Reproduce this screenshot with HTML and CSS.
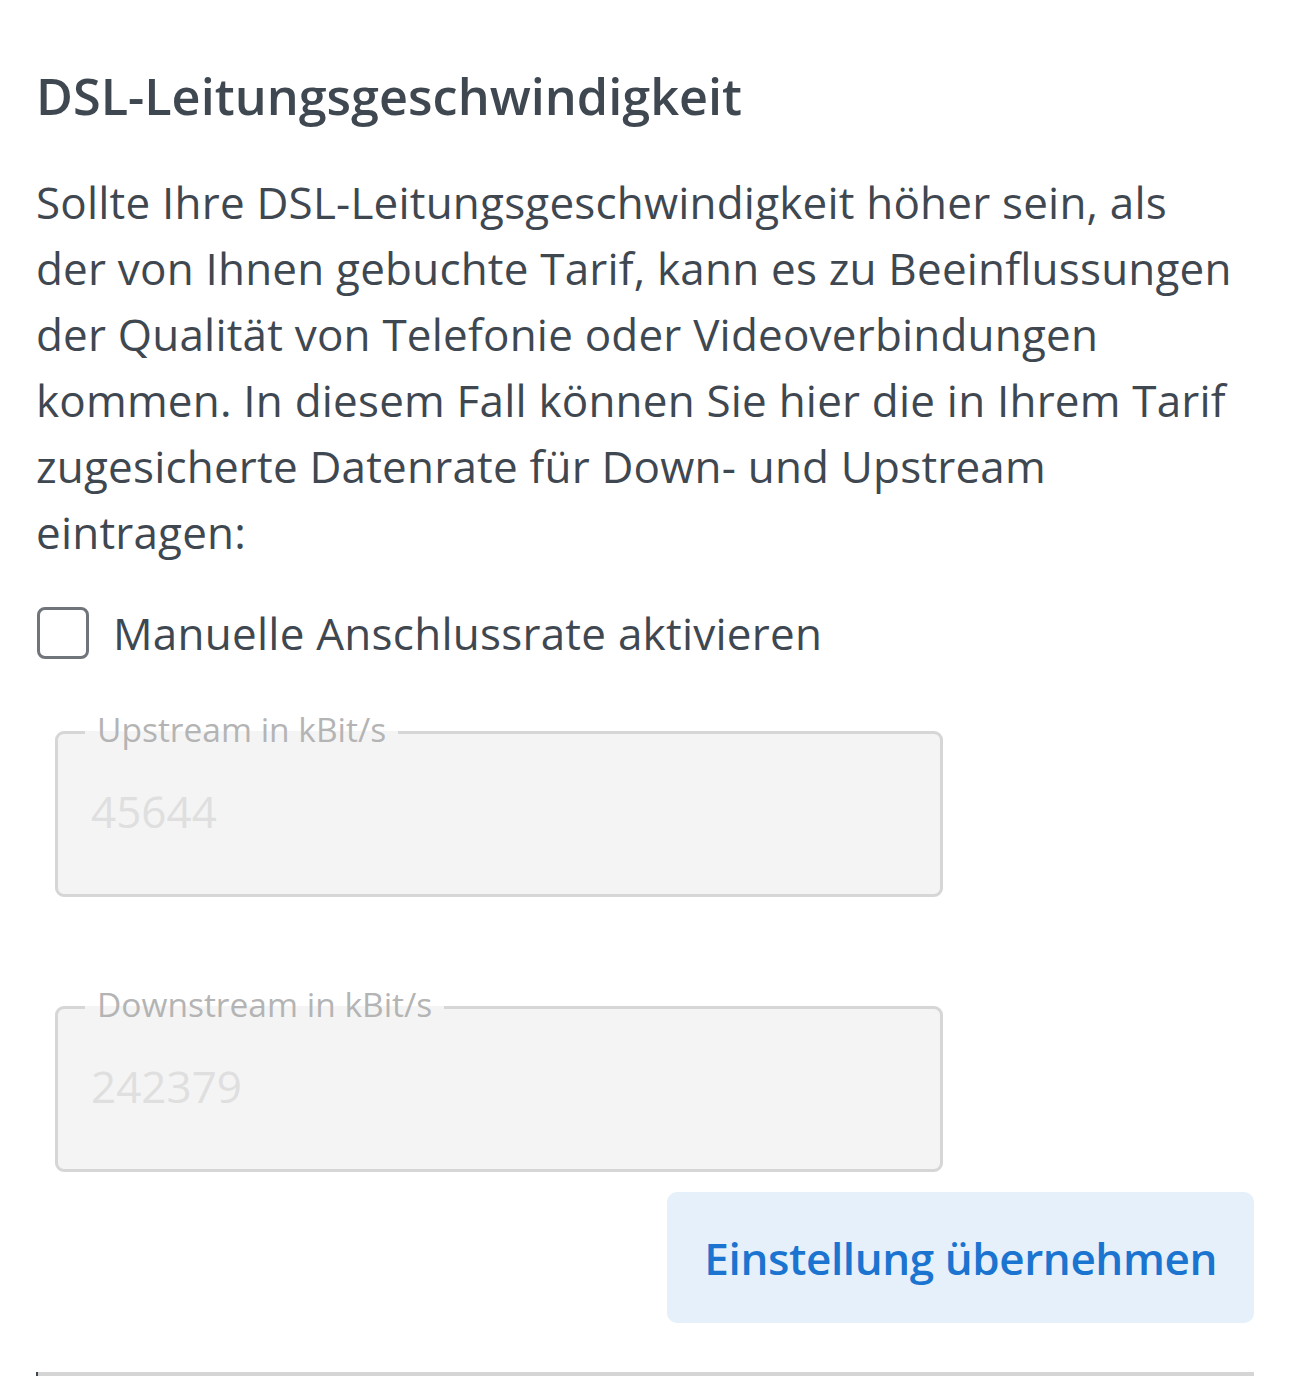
FILE: index.html
```html
<!DOCTYPE html>
<html lang="de">
<head>
<meta charset="utf-8">
<title>DSL-Leitungsgeschwindigkeit</title>
<link rel="stylesheet" href="styles.css">
</head>
<body>
<main class="panel">
  <h1 class="title">DSL-Leitungsgeschwindigkeit</h1>
  <p class="intro">Sollte Ihre DSL-Leitungsgeschwindigkeit höher sein, als der von Ihnen gebuchte Tarif, kann es zu Beeinflussungen der Qualität von Telefonie oder Videoverbindungen kommen. In diesem Fall können Sie hier die in Ihrem Tarif zugesicherte Datenrate für Down- und Upstream eintragen:</p>
  <label class="check-row">
    <input type="checkbox" class="check">
    <span class="check-label">Manuelle Anschlussrate aktivieren</span>
  </label>
  <fieldset class="field field-up" disabled>
    <legend class="field-legend">Upstream in kBit/s</legend>
    <div class="field-value">45644</div>
  </fieldset>
  <fieldset class="field field-down" disabled>
    <legend class="field-legend">Downstream in kBit/s</legend>
    <div class="field-value">242379</div>
  </fieldset>
  <div class="actions">
    <button type="button" class="btn-apply">Einstellung übernehmen</button>
  </div>
  <div class="divider"></div>
</main>
</body>
</html>
```

FILE: styles.css
```css
html, body {
  margin: 0;
  padding: 0;
  background: #ffffff;
  overflow: hidden;
}

body {
  font-family: "Open Sans", "Noto Sans", sans-serif;
  color: #3f4851;
}

.panel {
  padding: 66px 36px 0 36px;
  display: flex;
  flex-direction: column;
}

.title {
  margin: 0;
  font-size: 50.4px;
  line-height: 60px;
  font-weight: 600;
  color: #3f4851;
}

.intro {
  margin: 43px 14px 0 0;
  font-size: 44px;
  line-height: 66px;
  font-weight: 400;
  letter-spacing: 0.2px;
}

.check-row {
  margin-top: 35px;
  display: flex;
  align-items: center;
  gap: 24px;
  height: 66px;
}

.check {
  appearance: none;
  -webkit-appearance: none;
  margin: 0 0 0 1px;
  width: 52px;
  height: 52px;
  box-sizing: border-box;
  border: 3px solid #6f757b;
  border-radius: 8px;
  background: #ffffff;
  flex: none;
}

.check-label {
  font-size: 44px;
  line-height: 66px;
  letter-spacing: 0.25px;
}

.field {
  margin: 43px 0 0 19px;
  width: 888px;
  box-sizing: border-box;
  border: 3px solid #d6d6d6;
  border-radius: 9px;
  background: #f4f4f4;
  padding: 0 31px 27px 33px;
  min-width: 0;
}

.field-down {
  margin-top: 87px;
}

.field-legend {
  padding: 0 12px 6px 12px;
  margin-left: -6px;
  font-size: 33.5px;
  line-height: 40px;
  color: #b4b4b4;
}

.field-value {
  font-size: 44px;
  line-height: 112px;
  color: #dfdfdf;
}

.actions {
  margin-top: 20px;
  display: flex;
  justify-content: flex-end;
}

.btn-apply {
  height: 131px;
  padding: 0 37px;
  border: none;
  border-radius: 10px;
  background: #e6f0fa;
  color: #1a74d0;
  font-family: "Open Sans", "Noto Sans", sans-serif;
  font-size: 44px;
  font-weight: 600;
  letter-spacing: -0.4px;
}

.divider {
  margin-top: 49px;
  height: 4px;
  background: #d5d5d5;
  border-left: 2px solid #3f4851;
}
```
